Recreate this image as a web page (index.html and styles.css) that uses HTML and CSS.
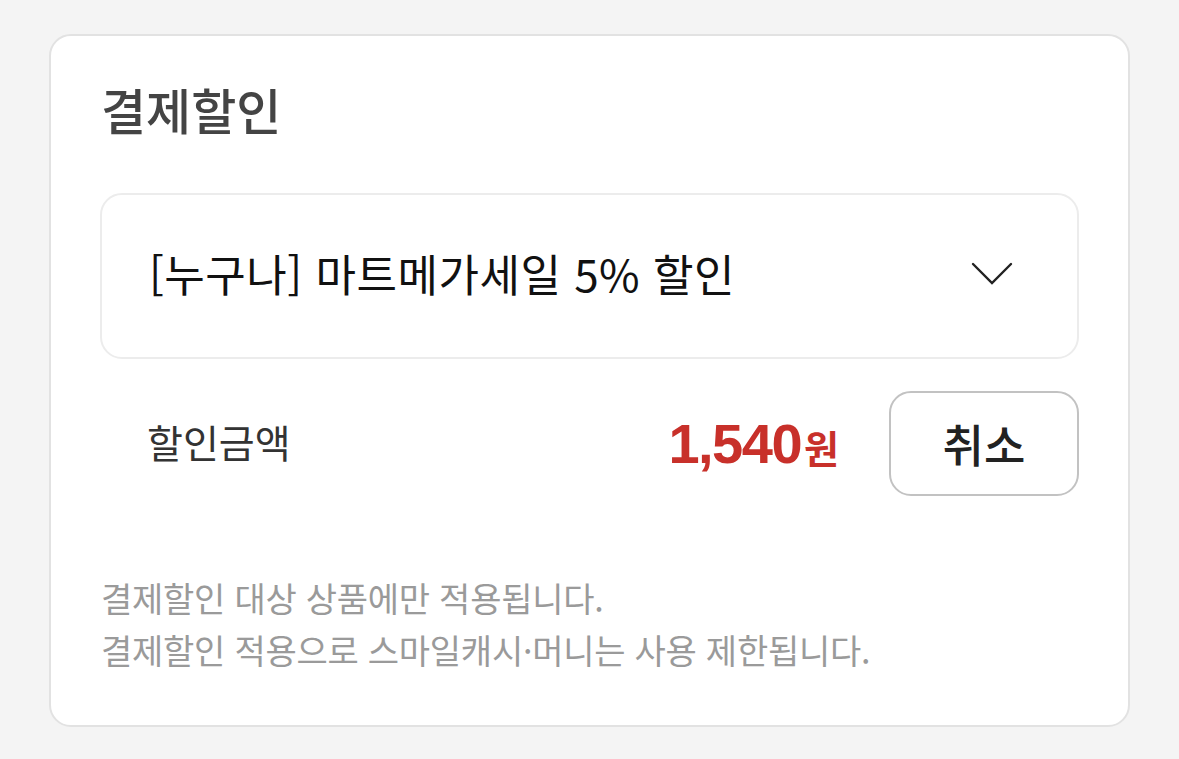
FILE: index.html
```html
<!DOCTYPE html>
<html lang="ko">
<head>
<meta charset="utf-8">
<title>결제할인</title>
<link rel="stylesheet" href="styles.css">
</head>
<body>
<section class="card">
  <h2 class="title">결제할인</h2>
  <div class="select">
    <span class="select-text">[누구나] 마트메가세일 5% 할인</span>
    <svg class="chevron" width="42" height="24" viewBox="0 0 42 24" aria-hidden="true">
      <polyline points="2,2 21,21 40,2" fill="none" stroke="#222" stroke-width="2.4" stroke-linecap="round" stroke-linejoin="miter"/>
    </svg>
  </div>
  <div class="row">
    <span class="label">할인금액</span>
    <span class="amount"><span class="num">1,540</span><span class="won">원</span></span>
    <button class="cancel" type="button">취소</button>
  </div>
  <div class="notes">
    <p>결제할인 대상 상품에만 적용됩니다.</p>
    <p>결제할인 적용으로 스마일캐시·머니는 사용 제한됩니다.</p>
  </div>
</section>
</body>
</html>
```

FILE: styles.css
```css
html, body {
  margin: 0;
  padding: 0;
  background: #f4f4f4;
}
body {
  font-family: "Noto Sans CJK KR", "Noto Sans", sans-serif;
  padding: 34px 49px 32px 49px;
}
.card {
  box-sizing: border-box;
  width: 1081px;
  height: 693px;
  background: #fff;
  border: 2px solid #e2e2e2;
  border-radius: 22px;
  padding: 46px 49px 0 49px;
}
.title {
  margin: 0 0 0 1px;
  font-size: 49px;
  line-height: 54px;
  font-weight: 500;
  color: #444;
}
.select {
  margin-top: 57px;
  box-sizing: border-box;
  height: 166px;
  border: 2px solid #ececec;
  border-radius: 22px;
  display: flex;
  align-items: center;
  justify-content: space-between;
  padding: 0 64px 0 47px;
}
.select-text {
  font-size: 44px;
  color: #111;
  line-height: 1;
  letter-spacing: 0.5px;
  margin-top: -6px;
}
.chevron {
  display: block;
  margin-top: -4px;
}
.row {
  margin-top: 32px;
  height: 105px;
  display: flex;
  align-items: center;
  padding-left: 47px;
}
.label {
  font-size: 39px;
  color: #333;
  flex: 1;
  line-height: 1;
  margin-top: -4px;
}
.amount {
  color: #c8302a;
  display: flex;
  align-items: baseline;
  margin-right: 50px;
}
.num {
  font-family: "Liberation Sans", Arial, sans-serif;
  font-weight: 700;
  font-size: 56px;
  letter-spacing: -1.5px;
}
.won {
  font-size: 38px;
  font-weight: 700;
  margin-left: 3px;
}
.cancel {
  box-sizing: border-box;
  width: 190px;
  height: 105px;
  border: 2px solid #c2c2c2;
  border-radius: 22px;
  background: #fff;
  font-family: "Noto Sans CJK KR", "Noto Sans", sans-serif;
  font-size: 45px;
  font-weight: 500;
  color: #222;
  padding: 0;
}
.notes {
  margin-top: 76px;
  padding-left: 1px;
}
.notes p {
  margin: 0;
  font-size: 34px;
  line-height: 52px;
  color: #9a9a9a;
  letter-spacing: -0.25px;
}
```
